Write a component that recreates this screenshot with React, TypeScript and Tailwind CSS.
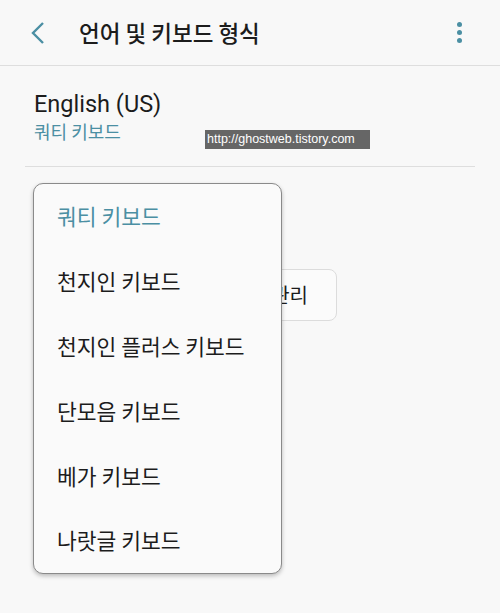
import React from 'react';

const KR = "font-['Noto_Sans_CJK_KR','Noto_Sans',sans-serif]";

const items = ['쿼티 키보드', '천지인 키보드', '천지인 플러스 키보드', '단모음 키보드', '베가 키보드', '나랏글 키보드'];

export default function App() {
  return (
    <div className={`relative w-[500px] h-[613px] bg-[#f8f8f8] overflow-hidden text-[#1c1c1c] ${KR}`}>
      {/* Header */}
      <header className="h-[66px] flex items-center border-b border-[#dedede]">
        <svg width="14" height="24" viewBox="0 0 14 24" className="ml-[31px]" fill="none">
          <path d="M12 2 L2 12 L12 22" stroke="#4b8fa3" strokeWidth="2.4" />
        </svg>
        <h1 className="ml-[34px] text-[22.5px] font-medium">언어 및 키보드 형식</h1>
        <div className="ml-auto mr-[38px] flex flex-col gap-[3px]">
          <span className="w-[5px] h-[5px] rounded-full bg-[#4b8fa3]" />
          <span className="w-[5px] h-[5px] rounded-full bg-[#4b8fa3]" />
          <span className="w-[5px] h-[5px] rounded-full bg-[#4b8fa3]" />
        </div>
      </header>

      {/* Language entry */}
      <div className="mx-[25px] pl-[9px] pt-[22px] pb-[24px] border-b border-[#dedede]">
        <p className="text-[23.5px] leading-[32px] font-['Roboto',sans-serif]">English (US)</p>
        <p className="text-[18px] leading-[22px] text-[#4b8fa3]">쿼티 키보드</p>
      </div>

      {/* Button behind menu */}
      <div className="flex justify-end pr-[163px] mt-[102px]">
        <button className="h-[52px] px-[28px] rounded-[8px] border border-[#dcdcdc] bg-[#fbfbfb] text-[20px]">
          키보드 관리
        </button>
      </div>

      {/* Watermark */}
      <div className="absolute left-[205px] top-[130px] w-[165px] h-[19px] bg-[#666666] text-white text-[12.5px] leading-[19px] pl-[2px] font-['Liberation_Sans',sans-serif] whitespace-nowrap">
        http://ghostweb.tistory.com
      </div>

      {/* Popup menu */}
      <div className="absolute left-[33px] top-[183px] w-[249px] h-[391px] rounded-[10px] border border-[#8a8a8a] bg-[#fafafa] shadow-[0_2px_4px_rgba(0,0,0,0.25)] flex flex-col">
        {items.map((t, i) => (
          <div
            key={t}
            className={`h-[65px] flex items-center pl-[23px] text-[21.5px] ${i === 0 ? 'text-[#4b8fa3]' : 'text-[#1c1c1c]'}`}
          >
            {t}
          </div>
        ))}
      </div>
    </div>
  );
}
